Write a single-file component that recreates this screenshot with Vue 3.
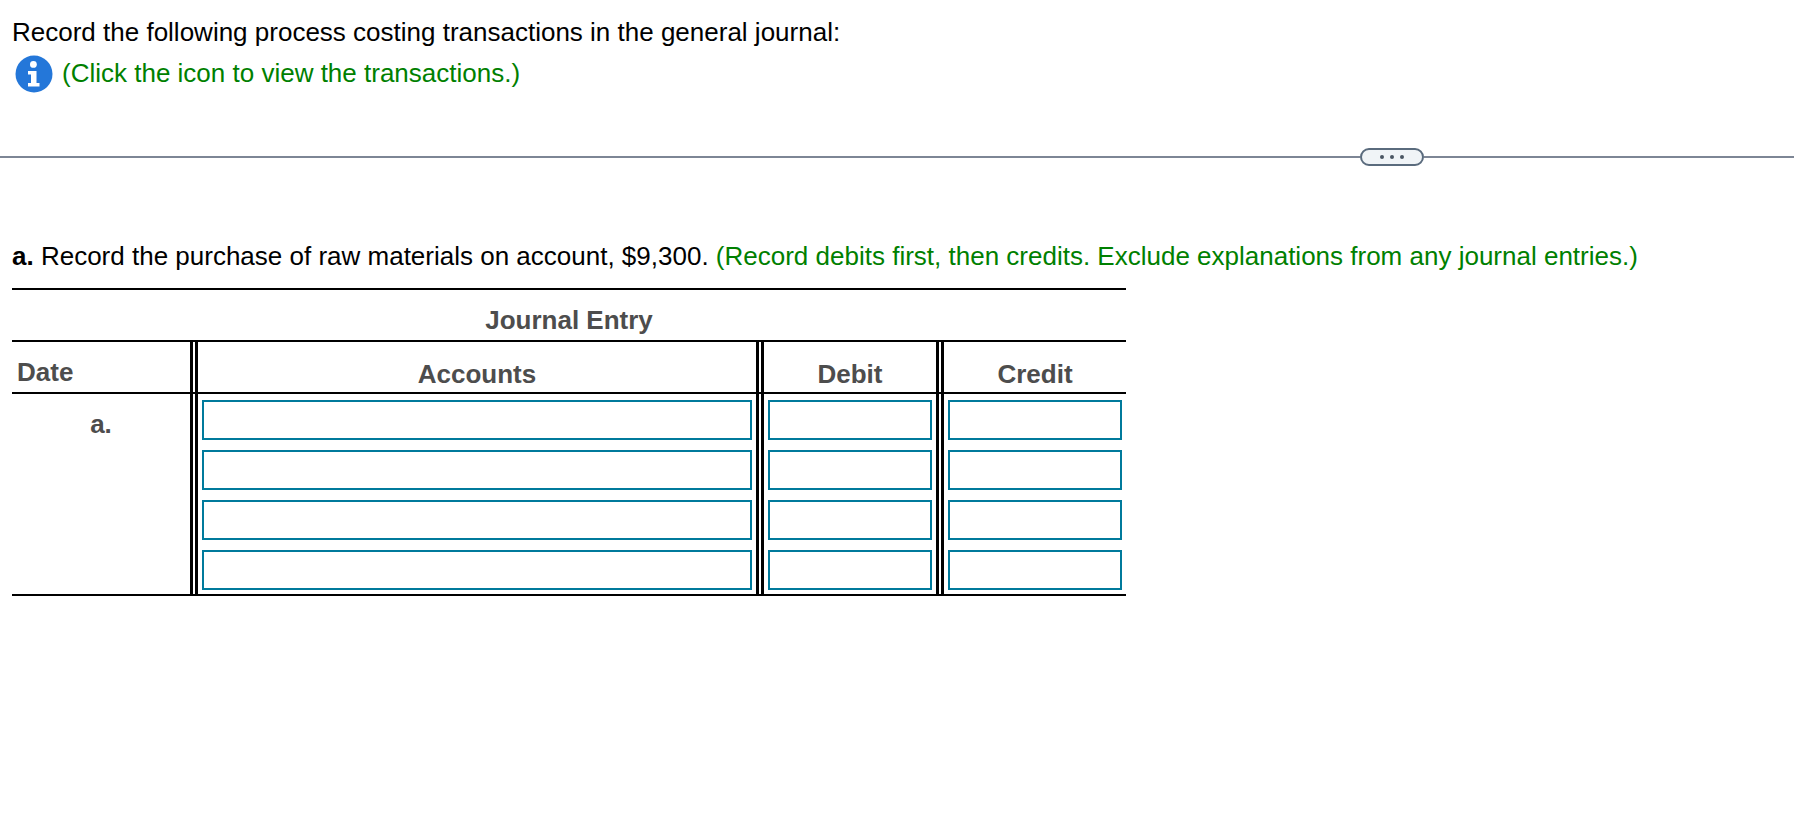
<template>
  <div class="page">
    <div class="intro">
      <p class="line">Record the following process costing transactions in the general journal:</p>
      <p class="line info">
        <svg class="info-icon" viewBox="0 0 38 38" aria-hidden="true">
          <circle cx="19" cy="19" r="18.5" fill="#2477d9" />
          <circle cx="18.4" cy="9.4" r="3.4" fill="#fff" />
          <path d="M13 16h8.5v12h3v3.4H13V28h3v-8.6h-3z" fill="#fff" />
        </svg>
        <span class="green lift">(Click the icon to view the transactions.)</span>
      </p>
    </div>

    <div class="divider">
      <span class="rule rule-left"></span>
      <span class="pill"><i></i><i></i><i></i></span>
      <span class="rule"></span>
    </div>

    <p class="line question">
      <b>a.</b> Record the purchase of raw materials on account, $9,300.
      <span class="green">(Record debits first, then credits. Exclude explanations from any journal entries.)</span>
    </p>

    <div class="journal">
      <div class="title">Journal Entry</div>
      <div class="row head">
        <div class="cell date">Date</div>
        <div class="cell accounts">Accounts</div>
        <div class="cell debit">Debit</div>
        <div class="cell credit">Credit</div>
      </div>
      <div class="row body">
        <div class="cell date"><span class="ref">a.</span></div>
        <div class="cell accounts">
          <input v-for="n in rows" :key="n" type="text" />
        </div>
        <div class="cell debit">
          <input v-for="n in rows" :key="n" type="text" />
        </div>
        <div class="cell credit">
          <input v-for="n in rows" :key="n" type="text" />
        </div>
      </div>
    </div>
  </div>
</template>

<script setup>
const rows = 4;
</script>

<style>
html,
body {
  background: #fff;
}
</style>

<style scoped>
.page {
  width: 1794px;
  height: 828px;
  overflow: hidden;
  font-family: "Liberation Sans", Arial, sans-serif;
  font-size: 26px;
  color: #000;
}

.line {
  margin: 0;
  line-height: 28px;
}

.intro {
  padding: 18px 0 0 12px;
}

.info {
  display: flex;
  align-items: center;
  margin-top: 9px;
}

.info-icon {
  width: 38px;
  height: 38px;
  margin: 0 9px 0 3px;
}

.green {
  color: #008000;
}

.lift {
  padding-bottom: 2px;
}

.divider {
  display: flex;
  align-items: center;
  margin-top: 55px;
  height: 18px;
}

.rule {
  flex: 1;
  height: 2px;
  background: #7d8695;
}

.rule-left {
  flex: 0 0 1360px;
}

.pill {
  width: 64px;
  height: 18px;
  box-sizing: border-box;
  border: 2px solid #5a6b7d;
  border-radius: 9px;
  background: #f0f4f7;
  display: flex;
  align-items: center;
  justify-content: center;
  gap: 6px;
}

.pill i {
  width: 4px;
  height: 4px;
  border-radius: 50%;
  background: #4a5563;
}

.question {
  padding-left: 12px;
  margin-top: 76px;
}

.journal {
  width: 1114px;
  margin: 18px 0 0 12px;
  border-top: 2px solid #000;
  color: #4d4d4d;
  font-weight: bold;
}

.title {
  height: 50px;
  line-height: 60px;
  text-align: center;
}

.row {
  display: grid;
  grid-template-columns: 186px 566px 180px 182px;
  border-top: 2px solid #000;
}

.head {
  height: 50px;
  line-height: 64px;
}

.body {
  height: 200px;
  border-bottom: 2px solid #000;
}

.cell {
  display: flex;
  flex-direction: column;
  gap: 10px;
  box-sizing: border-box;
  border-right: 8px double #000;
  text-align: center;
}

.body .cell {
  padding: 6px 4px 0;
}

.cell.credit {
  border-right: 0;
}

.head .date {
  text-align: left;
  padding-left: 5px;
  line-height: 60px;
}

.ref {
  line-height: 48px;
  text-align: center;
}

input {
  display: block;
  box-sizing: border-box;
  width: 100%;
  height: 40px;
  margin: 0;
  padding: 0;
  border: 2px solid #007a9c;
  border-radius: 0;
  background: #fff;
  outline: none;
}

.accounts input {
  width: 550px;
}
</style>
